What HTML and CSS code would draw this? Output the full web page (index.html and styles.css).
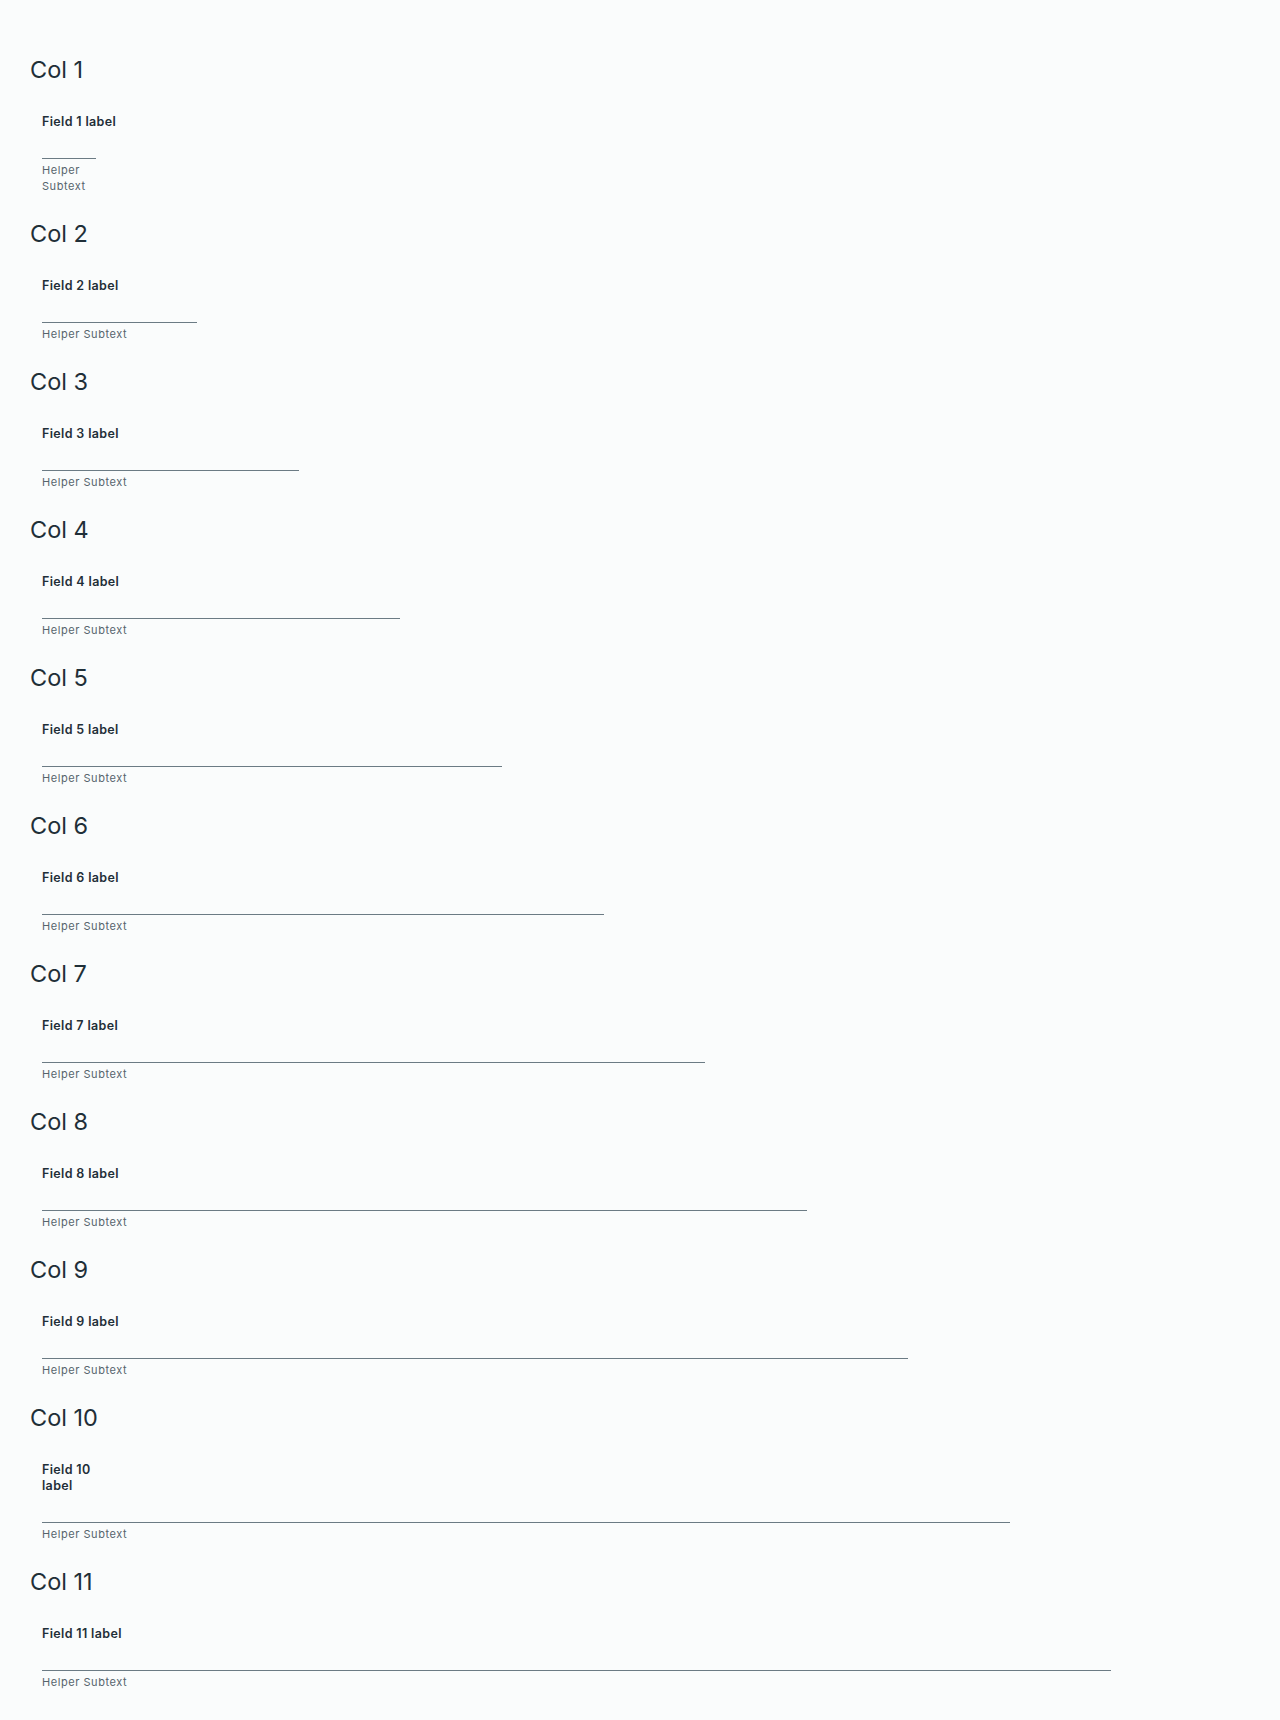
FILE: index.html
```html
<!DOCTYPE html>
<html lang="en">
<head>
<meta charset="utf-8">
<title>Columns</title>
<link rel="stylesheet" href="styles.css">
</head>
<body>
<main class="page">
  <section class="row">
    <div class="col col-1">
      <h3 class="title">Col 1</h3>
      <div class="field">
        <label class="label">Field 1 label</label>
        <div class="control"></div>
        <div class="helper">Helper Subtext</div>
      </div>
    </div>
  </section>
  <section class="row">
    <div class="col col-2">
      <h3 class="title">Col 2</h3>
      <div class="field">
        <label class="label">Field 2 label</label>
        <div class="control"></div>
        <div class="helper">Helper Subtext</div>
      </div>
    </div>
  </section>
  <section class="row">
    <div class="col col-3">
      <h3 class="title">Col 3</h3>
      <div class="field">
        <label class="label">Field 3 label</label>
        <div class="control"></div>
        <div class="helper">Helper Subtext</div>
      </div>
    </div>
  </section>
  <section class="row">
    <div class="col col-4">
      <h3 class="title">Col 4</h3>
      <div class="field">
        <label class="label">Field 4 label</label>
        <div class="control"></div>
        <div class="helper">Helper Subtext</div>
      </div>
    </div>
  </section>
  <section class="row">
    <div class="col col-5">
      <h3 class="title">Col 5</h3>
      <div class="field">
        <label class="label">Field 5 label</label>
        <div class="control"></div>
        <div class="helper">Helper Subtext</div>
      </div>
    </div>
  </section>
  <section class="row">
    <div class="col col-6">
      <h3 class="title">Col 6</h3>
      <div class="field">
        <label class="label">Field 6 label</label>
        <div class="control"></div>
        <div class="helper">Helper Subtext</div>
      </div>
    </div>
  </section>
  <section class="row">
    <div class="col col-7">
      <h3 class="title">Col 7</h3>
      <div class="field">
        <label class="label">Field 7 label</label>
        <div class="control"></div>
        <div class="helper">Helper Subtext</div>
      </div>
    </div>
  </section>
  <section class="row">
    <div class="col col-8">
      <h3 class="title">Col 8</h3>
      <div class="field">
        <label class="label">Field 8 label</label>
        <div class="control"></div>
        <div class="helper">Helper Subtext</div>
      </div>
    </div>
  </section>
  <section class="row">
    <div class="col col-9">
      <h3 class="title">Col 9</h3>
      <div class="field">
        <label class="label">Field 9 label</label>
        <div class="control"></div>
        <div class="helper">Helper Subtext</div>
      </div>
    </div>
  </section>
  <section class="row">
    <div class="col col-10">
      <h3 class="title">Col 10</h3>
      <div class="field">
        <label class="label label-narrow">Field 10 label</label>
        <div class="control"></div>
        <div class="helper">Helper Subtext</div>
      </div>
    </div>
  </section>
  <section class="row">
    <div class="col col-11">
      <h3 class="title">Col 11</h3>
      <div class="field">
        <label class="label">Field 11 label</label>
        <div class="control"></div>
        <div class="helper">Helper Subtext</div>
      </div>
    </div>
  </section>
</main>
</body>
</html>
```

FILE: styles.css
```css
html, body {
  margin: 0;
  padding: 0;
  background: #fafcfc;
}

body {
  font-family: "Inter", "Noto Sans", sans-serif;
  color: #21333b;
}

.page {
  padding: 52px 0 0 18px;
  width: 1219px;
}

.row {
  display: grid;
  grid-template-columns: repeat(12, 1fr);
}

.col {
  padding: 0 12px;
  min-width: 0;
}

.col-1 { grid-column: span 1; }
.col-2 { grid-column: span 2; }
.col-3 { grid-column: span 3; }
.col-4 { grid-column: span 4; }
.col-5 { grid-column: span 5; }
.col-6 { grid-column: span 6; }
.col-7 { grid-column: span 7; }
.col-8 { grid-column: span 8; }
.col-9 { grid-column: span 9; }
.col-10 { grid-column: span 10; }
.col-11 { grid-column: span 11; }

.title {
  margin: 0;
  font-size: 23.5px;
  line-height: 36px;
  font-weight: 400;
  color: #1f2f38;
}

.field {
  padding: 0 12px;
  margin-top: 26px;
  margin-bottom: 22px;
}

.label {
  display: block;
  font-size: 12.5px;
  line-height: 16px;
  font-weight: 600;
  letter-spacing: 0.35px;
  white-space: nowrap;
  color: #1f2f38;
}

.label-narrow {
  white-space: normal;
  max-width: 64px;
}

.control {
  height: 28px;
  border-bottom: 1px solid #6b7b84;
}

.helper {
  margin-top: 3px;
  font-size: 11px;
  line-height: 16px;
  letter-spacing: 0.55px;
  color: #56646c;
}
```
